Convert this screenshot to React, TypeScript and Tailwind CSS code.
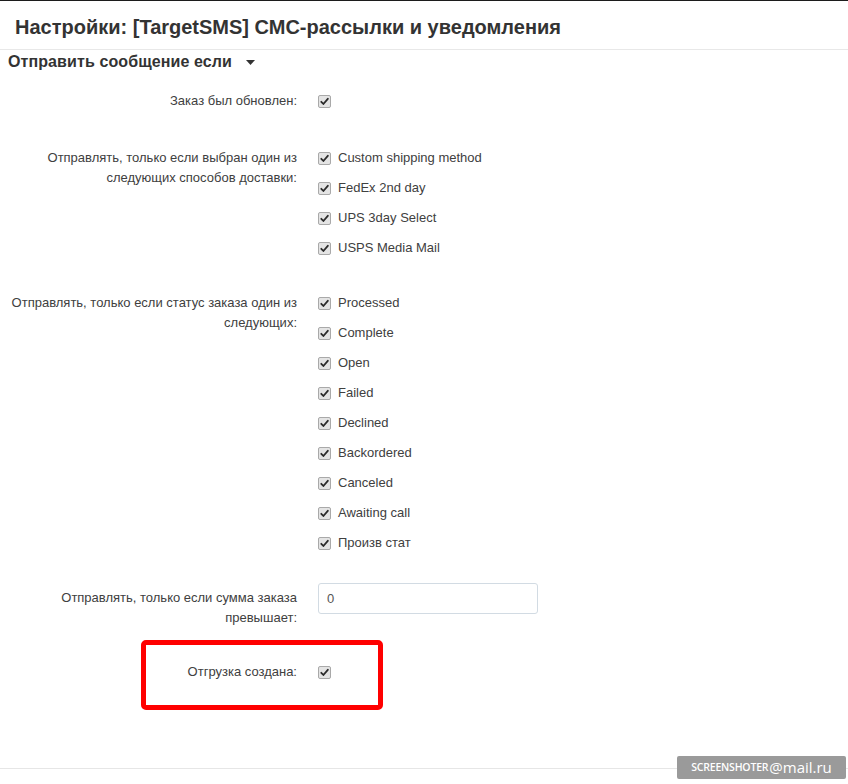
import React from 'react';

const shipping = ['Custom shipping method', 'FedEx 2nd day', 'UPS 3day Select', 'USPS Media Mail'];
const statuses = ['Processed', 'Complete', 'Open', 'Failed', 'Declined', 'Backordered', 'Canceled', 'Awaiting call', 'Произв стат'];

const Check: React.FC = () => (
    <span className="inline-flex w-[13px] h-[13px] shrink-0 items-center justify-center rounded-[2px] border border-[#a9a9a9] bg-[#e4e4e4]">
        <svg width="9" height="9" viewBox="0 0 9 9">
            <path d="M1.3 4.8 L3.4 7 L7.8 1.8" fill="none" stroke="#2b2b2b" strokeWidth="1.8" strokeLinecap="round" strokeLinejoin="round" />
        </svg>
    </span>
);

const CheckItem: React.FC<{ label?: string }> = ({ label }) => (
    <div className="flex h-[20px] items-center gap-[7px]">
        <Check />
        {label && <span>{label}</span>}
    </div>
);

const Label: React.FC<{ children: React.ReactNode; className?: string }> = ({ children, className }) => (
    <div className={'w-[290px] ml-[7px] shrink-0 text-right leading-[20px] ' + (className ?? '')}>{children}</div>
);

const App: React.FC = () => {
    return (
        <div className="relative w-[848px] h-[784px] bg-white border-t border-[#1c1c1c] font-['Liberation_Sans',Arial,sans-serif] text-[13px] text-[#404040] overflow-hidden">
            <div className="h-[49px] flex items-center pl-[15px] pt-[4px] border-b border-[#e8e8e8]">
                <h1 className="text-[20px] font-bold text-[#333]">Настройки: [TargetSMS] СМС-рассылки и уведомления</h1>
            </div>

            <div className="h-[21px] pl-[8px] pt-[2px] flex items-center gap-[14px] text-[16px] font-bold text-[#333] tracking-[0.1px]">
                <span>Отправить сообщение если</span>
                <svg width="9" height="5" viewBox="0 0 9 5" className="mt-[1px]">
                    <path d="M0 0 H9 L4.5 5 Z" fill="#333" />
                </svg>
            </div>

            <div className="relative flex flex-col">
                <div className="flex mt-[20px] gap-[21px]">
                    <Label>Заказ был обновлен:</Label>
                    <CheckItem />
                </div>

                <div className="flex mt-[37px] gap-[21px]">
                    <Label>Отправлять, только если выбран один из следующих способов доставки:</Label>
                    <div className="flex flex-col gap-[10px]">
                        {shipping.map((s) => (
                            <CheckItem key={s} label={s} />
                        ))}
                    </div>
                </div>

                <div className="flex mt-[35px] gap-[21px]">
                    <Label>Отправлять, только если статус заказа один из следующих:</Label>
                    <div className="flex flex-col gap-[10px]">
                        {statuses.map((s) => (
                            <CheckItem key={s} label={s} />
                        ))}
                    </div>
                </div>

                <div className="flex mt-[30px] gap-[21px]">
                    <Label className="pt-[5px]">Отправлять, только если сумма заказа превышает:</Label>
                    <input
                        type="text"
                        defaultValue="0"
                        className="w-[220px] h-[31px] px-[8px] rounded-[3px] border border-[#d2dbe3] text-[13px] text-[#555] outline-none"
                    />
                </div>

                <div className="flex mt-[34px] gap-[21px]">
                    <Label>Отгрузка создана:</Label>
                    <CheckItem />
                </div>

                <div className="absolute left-[141px] top-[569px] w-[242px] h-[70px] rounded-[5px] border-[5px] border-[#ff0000]" />
            </div>

            <div className="absolute left-0 right-0 top-[767px] border-t border-[#e6e6e6]" />

            <div className="absolute left-[677px] top-[755px] w-[169px] h-[23px] rounded-[2px] bg-[#9a9a9a] flex items-center justify-center whitespace-nowrap text-white">
                <span className="text-[10.5px] font-semibold tracking-[-0.2px] font-['Open_Sans',sans-serif]">SCREENSHOTER</span>
                <span className="text-[15px] leading-none font-['Open_Sans',sans-serif] ml-[1px]">@mail.ru</span>
            </div>
        </div>
    );
};

export default App;
